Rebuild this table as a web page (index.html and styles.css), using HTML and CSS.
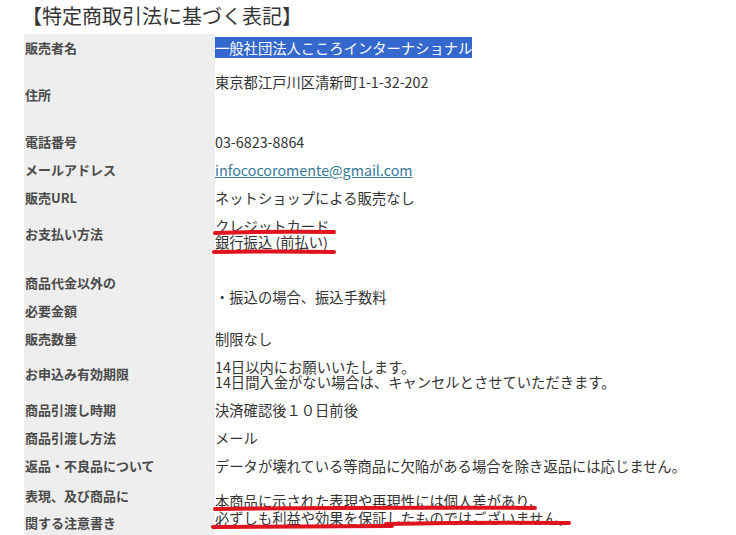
FILE: index.html
```html
<!DOCTYPE html>
<html lang="ja">
<head>
    <meta charset="UTF-8">
    <meta name="viewport" content="width=device-width, initial-scale=1.0">
    <title>特定商取引法に基づく表記</title>
    <link rel="stylesheet" href="styles.css">
</head>
<body>
    <h1 class="title">【特定商取引法に基づく表記】</h1>

    <table class="law-table">
        <tr class="row-28">
            <th>販売者名</th>
            <td><span class="selected">一般社団法人こころインターナショナル</span></td>
        </tr>
        <tr class="row-address">
            <th>住所</th>
            <td class="top">東京都江戸川区清新町1-1-32-202</td>
        </tr>
        <tr class="row-28">
            <th>電話番号</th>
            <td>03-6823-8864</td>
        </tr>
        <tr class="row-28">
            <th>メールアドレス</th>
            <td><a href="#">infococoromente@gmail.com</a></td>
        </tr>
        <tr class="row-28">
            <th>販売URL</th>
            <td>ネットショップによる販売なし</td>
        </tr>
        <tr class="row-pay">
            <th>お支払い方法</th>
            <td class="lines-16">クレジットカード<br>銀行振込 (前払い)</td>
        </tr>
        <tr class="row-fee">
            <th class="lines-28">商品代金以外の<br>必要金額</th>
            <td>・振込の場合、振込手数料</td>
        </tr>
        <tr class="row-28">
            <th>販売数量</th>
            <td>制限なし</td>
        </tr>
        <tr class="row-term">
            <th>お申込み有効期限</th>
            <td class="lines-15">14日以内にお願いいたします。<br>14日間入金がない場合は、キャンセルとさせていただきます。</td>
        </tr>
        <tr class="row-29">
            <th>商品引渡し時期</th>
            <td>決済確認後１０日前後</td>
        </tr>
        <tr class="row-28">
            <th>商品引渡し方法</th>
            <td>メール</td>
        </tr>
        <tr class="row-28">
            <th>返品・不良品について</th>
            <td>データが壊れている等商品に欠陥がある場合を除き返品には応じません。</td>
        </tr>
        <tr class="row-note">
            <th class="lines-27">表現、及び商品に<br>関する注意書き</th>
            <td class="lines-17">本商品に示された表現や再現性には個人差があり、<br>必ずしも利益や効果を保証したものではございません。</td>
        </tr>
    </table>

    <!-- hand-drawn red marks over the text -->
    <svg class="marks" width="736" height="535" viewBox="0 0 736 535">
        <path d="M215 233 Q275 231 334 232" />
        <path d="M214 252 Q275 251 334 252" />
        <path d="M215 509 Q380 507 535 508" />
        <path d="M213 527 L392 526" />
        <path d="M386 524 Q480 522 569 523" />
    </svg>
</body>
</html>
```

FILE: styles.css
```css
body {
    margin: 0;
    background: #fff;
    color: #333;
    font-family: "Noto Sans CJK JP", "Noto Sans", sans-serif;
    position: relative;
    width: 736px;
    height: 535px;
    overflow: hidden;
}

.title {
    margin: 0 0 0 22px;
    height: 34px;
    line-height: 32px;
    font-size: 20px;
    font-weight: normal;
    color: #333;
}

.law-table {
    margin-left: 24px;
    border-collapse: collapse;
    border-spacing: 0;
    width: 712px;
}

.law-table th,
.law-table td {
    padding: 0;
    vertical-align: middle;
}

.law-table th {
    width: 190px;
    padding-left: 1px;
    background: #eeeeee;
    color: #4a4a4a;
    font-size: 13px;
    font-weight: bold;
    text-align: left;
    line-height: 20px;
}

.law-table td {
    font-size: 14.3px;
    line-height: 20px;
    color: #333;
}

.law-table td.top {
    vertical-align: top;
    padding-top: 10px;
}

.row-28 { height: 28px; }
.row-29 { height: 29px; }
.row-address { height: 66px; }
.row-pay { height: 44px; }
.row-term { height: 42px; }
.row-note { height: 57px; }

.row-fee { height: 69px; }
.row-fee th,
.row-fee td { padding-top: 12px; }

.law-table .lines-15 { line-height: 15px; }
.law-table .lines-16 { line-height: 16px; }
.law-table .lines-17 { line-height: 17px; }
.law-table .lines-27 { line-height: 27px; }
.law-table .lines-28 { line-height: 28px; }

.selected {
    background: #3568cc;
    color: #fff;
}

.law-table a {
    color: #35799a;
    text-decoration: underline;
}

.marks {
    position: absolute;
    top: 0;
    left: 0;
    pointer-events: none;
}

.marks path {
    fill: none;
    stroke: #e0141e;
    stroke-width: 4;
    stroke-linecap: round;
}
```
